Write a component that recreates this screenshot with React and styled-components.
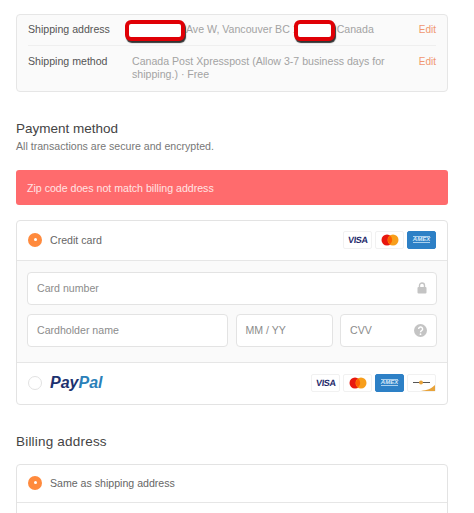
import React from 'react';
import styled, { createGlobalStyle } from 'styled-components';

const GlobalStyle = createGlobalStyle`
  html, body {
    margin: 0;
    padding: 0;
    background: #fff;
    font-family: "Liberation Sans", Arial, sans-serif;
    overflow: hidden;
  }
`;

const Page = styled.div`
  width: 474px;
  height: 513px;
  box-sizing: border-box;
  padding: 14px 26px 0 16px;
  overflow: hidden;
`;

const Summary = styled.div`
  background: #fafafa;
  border: 1px solid #e6e6e6;
  border-radius: 4px;
  padding: 0 11px;
  height: 78px;
  box-sizing: border-box;
`;

const SummaryRow = styled.div`
  display: flex;
  align-items: flex-start;
  font-size: 10.6px;
  line-height: 13px;
  padding-top: ${props => props.$top}px;
  height: ${props => props.$height}px;
  box-sizing: border-box;
  border-bottom: ${props => props.$last ? 'none' : '1px solid #efefef'};
`;

const Label = styled.div`
  width: 104px;
  flex: none;
  color: #555;
`;

const Value = styled.div`
  flex: 1;
  color: #a3a3a3;
  white-space: pre-wrap;
`;

const Redaction = styled.span`
  display: inline-block;
  width: ${props => props.$width}px;
  height: 21px;
  box-sizing: border-box;
  margin: -4px ${props => props.$right}px -4px ${props => props.$left}px;
  vertical-align: top;
  position: relative;
  top: 1px;
  background: #fff;
  border: 4px solid #e00006;
  border-radius: 6px;
  box-shadow: 1px 2px 1px #333;
`;

const Edit = styled.div`
  flex: none;
  margin-left: 10px;
  font-size: 10px;
  color: #f0976f;
`;

const Heading = styled.h2`
  margin: ${props => props.$top}px 0 0;
  font-size: 13.5px;
  letter-spacing: ${props => props.$spacing || 0}px;
  line-height: 17px;
  font-weight: 400;
  color: #444;
`;

const SubHeading = styled.p`
  margin: 2px 0 0;
  font-size: 10.6px;
  line-height: 14px;
  color: #777;
`;

const Alert = styled.div`
  margin-top: 17px;
  height: 35px;
  padding-left: 11px;
  display: flex;
  align-items: center;
  background: #ff6b6d;
  border-radius: 3px;
  color: #ffe4e4;
  font-size: 10.6px;
`;

const Card = styled.div`
  margin-top: ${props => props.$top}px;
  border: 1px solid #e3e3e3;
  border-radius: 4px;
  background: #fff;
`;

const OptionRow = styled.div`
  display: flex;
  align-items: center;
  height: ${props => props.$height}px;
  padding: 0 11px 2px;
  box-sizing: border-box;
  font-size: 10.6px;
  color: #666;
  border-bottom: ${props => props.$last ? 'none' : '1px solid #e6e6e6'};
`;

const Radio = styled.span`
  width: 14px;
  height: 14px;
  flex: none;
  box-sizing: border-box;
  margin-right: 8px;
  border-radius: 50%;
  display: flex;
  align-items: center;
  justify-content: center;
  background: ${props => props.$on ? '#ff8a3d' : '#fff'};
  border: ${props => props.$on ? 'none' : '1px solid #e2e2e2'};
  &::after {
    content: '';
    display: ${props => props.$on ? 'block' : 'none'};
    width: 3px;
    height: 3px;
    border-radius: 50%;
    background: #fff;
  }
`;

const Logos = styled.div`
  margin-left: auto;
  display: flex;
  gap: 3px;
`;

const Badge = styled.div`
  width: 29px;
  height: 18px;
  box-sizing: border-box;
  border-radius: 2px;
  display: flex;
  align-items: center;
  justify-content: center;
  background: ${props => props.$blue ? '#2d80c6' : '#fff'};
  border: 1px solid ${props => props.$blue ? '#2d80c6' : '#f1f1f1'};
`;

const VisaText = styled.span`
  font-size: 9px;
  font-weight: 700;
  letter-spacing: -0.3px;
  transform: skewX(-6deg);
  color: #1f2a6b;
`;

const AmexText = styled.span`
  font-size: 6px;
  font-weight: 700;
  font-style: italic;
  color: #d5e8f8;
  border-top: 1px solid #a9d0ee;
  border-bottom: 1px solid #a9d0ee;
  line-height: 5px;
`;

const PayPalMark = styled.span`
  font-size: 16px;
  font-weight: 700;
  font-style: italic;
  color: #1d3270;
  & > span {
    color: #2a80b9;
  }
`;

const Form = styled.div`
  background: #fafafa;
  height: 103px;
  box-sizing: border-box;
  padding: 11px 10px 0;
  border-top: 1px solid #e6e6e6;
  border-bottom: 1px solid #e6e6e6;
  display: flex;
  flex-direction: column;
  gap: 9px;
`;

const FormRow = styled.div`
  display: flex;
  gap: 7.5px;
`;

const Field = styled.div`
  width: ${props => props.$width ? props.$width + 'px' : 'auto'};
  flex: ${props => props.$width ? 'none' : '1'};
  height: 33px;
  box-sizing: border-box;
  padding: 0 9px 1px;
  display: flex;
  align-items: center;
  justify-content: space-between;
  background: #fff;
  border: 1px solid #e3e3e3;
  border-radius: 4px;
  font-size: 10.6px;
  color: #8c8c8c;
`;

const Mastercard = () => (
  <svg width="18" height="12" viewBox="0 0 18 12">
    <circle cx="6" cy="6" r="5.5" fill="#e8170f" />
    <circle cx="12" cy="6" r="5.5" fill="#f79e1b" />
    <path d="M9 1.6a5.5 5.5 0 0 1 0 8.8a5.5 5.5 0 0 1 0-8.8z" fill="#ff5f00" />
  </svg>
);

const Discover = () => (
  <svg width="27" height="16" viewBox="0 0 27 16">
    <path d="M5 7.5h17" stroke="#555" strokeWidth="1" />
    <circle cx="13" cy="7.5" r="2" fill="#e8a33a" />
    <path d="M13 16c6-1 10-2 14-6v6z" fill="#e8a33a" />
  </svg>
);

const Lock = () => (
  <svg width="10" height="12" viewBox="0 0 10 12">
    <path d="M2.5 5V3.5a2.5 2.5 0 0 1 5 0V5" fill="none" stroke="#c4c4c4" strokeWidth="1.4" />
    <rect x="0.5" y="5" width="9" height="6.5" rx="1" fill="#c4c4c4" />
  </svg>
);

const Help = () => (
  <svg width="13" height="13" viewBox="0 0 13 13">
    <circle cx="6.5" cy="6.5" r="6.5" fill="#c4c4c4" />
    <path d="M4.6 5a2 2 0 1 1 3 1.7c-.8.5-1.1.8-1.1 1.6" fill="none" stroke="#fff" strokeWidth="1.4" />
    <circle cx="6.5" cy="10.2" r="0.9" fill="#fff" />
  </svg>
);

const CardLogos = ({ discover }) => (
  <Logos>
    <Badge><VisaText>VISA</VisaText></Badge>
    <Badge><Mastercard /></Badge>
    <Badge $blue><AmexText>AMEX</AmexText></Badge>
    {discover ? <Badge><Discover /></Badge> : null}
  </Logos>
);

export default function App() {
  return (
    <Page>
      <GlobalStyle />
      <Summary>
        <SummaryRow $top={8} $height={31}>
          <Label>Shipping address</Label>
          <Value>
            <Redaction $width={60} $left={-7} $right={1} />Ave W, Vancouver BC 1<Redaction $width={41} $left={-5} $right={2} />Canada
          </Value>
          <Edit>Edit</Edit>
        </SummaryRow>
        <SummaryRow $top={9} $height={45} $last>
          <Label>Shipping method</Label>
          <Value>Canada Post Xpresspost (Allow 3-7 business days for shipping.) · Free</Value>
          <Edit>Edit</Edit>
        </SummaryRow>
      </Summary>

      <Heading $top={28}>Payment method</Heading>
      <SubHeading>All transactions are secure and encrypted.</SubHeading>
      <Alert>Zip code does not match billing address</Alert>

      <Card $top={15}>
        <OptionRow $height={39} $last>
          <Radio $on />
          Credit card
          <CardLogos />
        </OptionRow>
        <Form>
          <FormRow>
            <Field>Card number<Lock /></Field>
          </FormRow>
          <FormRow>
            <Field>Cardholder name</Field>
            <Field $width={97}>MM / YY</Field>
            <Field $width={97}>CVV<Help /></Field>
          </FormRow>
        </Form>
        <OptionRow $height={41} $last>
          <Radio />
          <PayPalMark>Pay<span>Pal</span></PayPalMark>
          <CardLogos discover />
        </OptionRow>
      </Card>

      <Heading $top={28} $spacing={0.2}>Billing address</Heading>
      <Card $top={14}>
        <OptionRow $height={38}>
          <Radio $on />
          Same as shipping address
        </OptionRow>
        <OptionRow $height={40} $last />
      </Card>
    </Page>
  );
}
